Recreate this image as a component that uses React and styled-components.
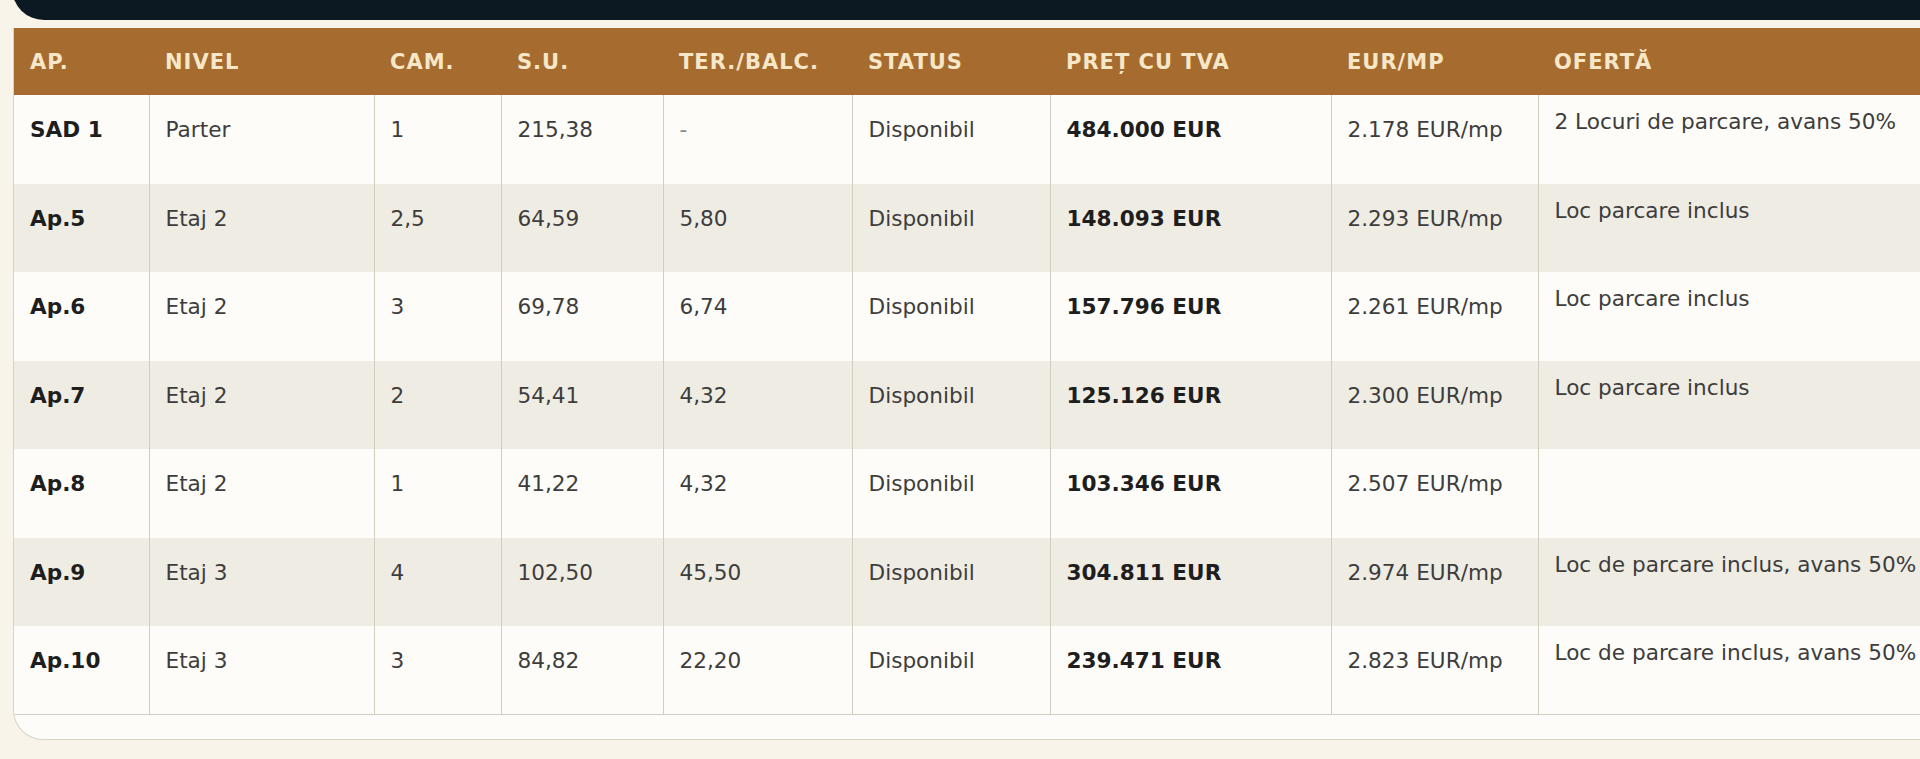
import React from 'react';
import styled, { createGlobalStyle } from 'styled-components';

const GlobalStyle = createGlobalStyle`
  html, body {
    margin: 0;
    padding: 0;
    background: #f8f4ea;
    overflow: hidden;
  }

  body {
    font-family: 'DejaVu Sans', 'Liberation Sans', sans-serif;
  }
`;

const StyledPage = styled.div`
  width: 1920px;
  height: 759px;
  overflow: hidden;
  padding-left: 12px;
  box-sizing: border-box;
`;

const StyledTopBar = styled.div`
  height: 50px;
  margin-top: -30px;
  width: 2100px;
  background: #0c1923;
  border-bottom-left-radius: 32px;
`;

const StyledCard = styled.div`
  margin-top: 8px;
  margin-left: 1px;
  width: 2000px;
  background: #fdfcf8;
  border: 1px solid #d8d2c6;
  border-top: none;
  border-bottom-left-radius: 30px;
  padding-bottom: 24px;
  overflow: hidden;
`;

const StyledTable = styled.table`
  border-collapse: collapse;
  table-layout: fixed;
  width: 1974px;
  border-bottom: 1px solid #d3cdc1;
`;

const StyledHeadCell = styled.th`
  height: 67px;
  padding: 0 16px;
  background: #a66b2f;
  color: #f6e7c9;
  font-size: 21px;
  font-weight: 700;
  letter-spacing: 1px;
  text-align: left;
  text-transform: uppercase;
  white-space: nowrap;
`;

const StyledRow = styled.tr`
  height: 88.5px;
  background: ${({ striped }) => (striped ? '#efece4' : '#fdfcf8')};
`;

const StyledCell = styled.td`
  vertical-align: top;
  padding: ${({ offer }) => (offer ? '12px 16px 0' : '20px 16px 0')};
  border-left: ${({ first }) => (first ? 'none' : '1px solid #d3cdc1')};
  font-size: 21.6px;
  line-height: 1.4;
  white-space: nowrap;
  color: ${({ muted }) => (muted ? '#8a8780' : '#3d3d3d')};
  font-weight: ${({ bold }) => (bold ? 700 : 400)};

  ${({ bold }) => bold && 'color: #1e1e1e;'}
`;

const columns = [
  { label: 'Ap.', width: 135 },
  { label: 'Nivel', width: 225 },
  { label: 'Cam.', width: 127 },
  { label: 'S.U.', width: 162 },
  { label: 'Ter./Balc.', width: 189 },
  { label: 'Status', width: 198 },
  { label: 'Preț cu TVA', width: 281 },
  { label: 'EUR/mp', width: 207 },
  { label: 'Ofertă', width: 450 },
];

const apartments = [
  ['SAD 1', 'Parter', '1', '215,38', '-', 'Disponibil', '484.000 EUR', '2.178 EUR/mp', '2 Locuri de parcare, avans 50%'],
  ['Ap.5', 'Etaj 2', '2,5', '64,59', '5,80', 'Disponibil', '148.093 EUR', '2.293 EUR/mp', 'Loc parcare inclus'],
  ['Ap.6', 'Etaj 2', '3', '69,78', '6,74', 'Disponibil', '157.796 EUR', '2.261 EUR/mp', 'Loc parcare inclus'],
  ['Ap.7', 'Etaj 2', '2', '54,41', '4,32', 'Disponibil', '125.126 EUR', '2.300 EUR/mp', 'Loc parcare inclus'],
  ['Ap.8', 'Etaj 2', '1', '41,22', '4,32', 'Disponibil', '103.346 EUR', '2.507 EUR/mp', ''],
  ['Ap.9', 'Etaj 3', '4', '102,50', '45,50', 'Disponibil', '304.811 EUR', '2.974 EUR/mp', 'Loc de parcare inclus, avans 50%'],
  ['Ap.10', 'Etaj 3', '3', '84,82', '22,20', 'Disponibil', '239.471 EUR', '2.823 EUR/mp', 'Loc de parcare inclus, avans 50%'],
];

const App = () => (
  <>
    <GlobalStyle />
    <StyledPage>
      <StyledTopBar />
      <StyledCard>
        <StyledTable>
          <colgroup>
            {columns.map(col => (
              <col key={col.label} style={{ width: col.width }} />
            ))}
          </colgroup>
          <thead>
            <tr>
              {columns.map(col => (
                <StyledHeadCell key={col.label}>{col.label}</StyledHeadCell>
              ))}
            </tr>
          </thead>
          <tbody>
            {apartments.map((row, i) => (
              <StyledRow key={row[0]} striped={i % 2 === 1}>
                {row.map((value, j) => (
                  <StyledCell
                    key={j}
                    first={j === 0}
                    bold={j === 0 || j === 6}
                    offer={j === 8}
                    muted={value === '-'}
                  >
                    {value}
                  </StyledCell>
                ))}
              </StyledRow>
            ))}
          </tbody>
        </StyledTable>
      </StyledCard>
    </StyledPage>
  </>
);

export default App;
